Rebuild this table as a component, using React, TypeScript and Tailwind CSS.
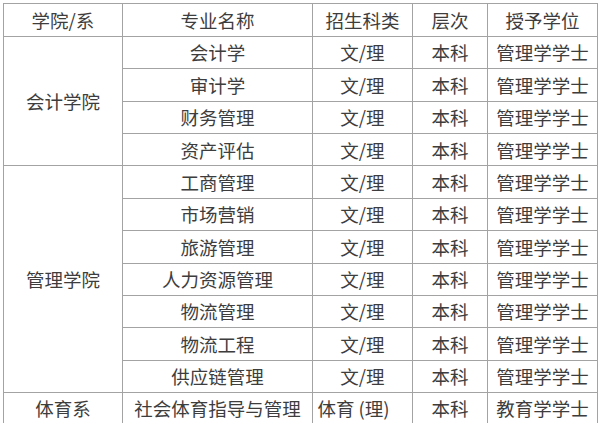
import React from "react";

const rows: [string, string][] = [
  ["会计学", "文/理"],
  ["审计学", "文/理"],
  ["财务管理", "文/理"],
  ["资产评估", "文/理"],
  ["工商管理", "文/理"],
  ["市场营销", "文/理"],
  ["旅游管理", "文/理"],
  ["人力资源管理", "文/理"],
  ["物流管理", "文/理"],
  ["物流工程", "文/理"],
  ["供应链管理", "文/理"],
];

const cell = "flex items-center justify-center border-r border-b border-[#a3a3a3]";

export default function App() {
  return (
    <div
      className="w-[600px] h-[423px] overflow-hidden bg-white pt-[3px] pl-[3px] text-[18.5px] text-[#3d3d3d]"
      style={{ fontFamily: '"Noto Sans CJK SC", "Noto Sans", sans-serif' }}
    >
      <div className="grid grid-cols-[119px_190px_100px_75px_110px] grid-rows-[33px_repeat(11,32.36px)_32px] border-t border-l border-[#a3a3a3] w-max leading-none">
        <div className={cell}>学院/系</div>
        <div className={cell}>专业名称</div>
        <div className={cell}>招生科类</div>
        <div className={cell}>层次</div>
        <div className={cell}>授予学位</div>

        <div className={`${cell} row-span-4`}>会计学院</div>
        {rows.slice(0, 4).map(([m, k]) => (
          <React.Fragment key={m}>
            <div className={cell}>{m}</div>
            <div className={cell}>{k}</div>
            <div className={cell}>本科</div>
            <div className={cell}>管理学学士</div>
          </React.Fragment>
        ))}

        <div className={`${cell} row-span-7`}>管理学院</div>
        {rows.slice(4).map(([m, k]) => (
          <React.Fragment key={m}>
            <div className={cell}>{m}</div>
            <div className={cell}>{k}</div>
            <div className={cell}>本科</div>
            <div className={cell}>管理学学士</div>
          </React.Fragment>
        ))}

        <div className={cell}>体育系</div>
        <div className={cell}>社会体育指导与管理</div>
        <div className={`${cell} pr-[18px]`}>体育 (理)</div>
        <div className={cell}>本科</div>
        <div className={cell}>教育学学士</div>
      </div>
    </div>
  );
}
